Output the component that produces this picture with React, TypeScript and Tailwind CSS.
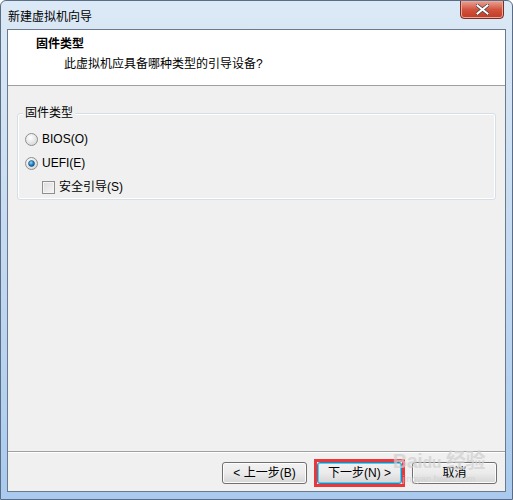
const font = { fontFamily: '"Liberation Sans", "Noto Sans CJK SC", sans-serif' };

function Radio({ checked }: { checked?: boolean }) {
  return (
    <svg width="13" height="13" viewBox="0 0 13 13">
      <defs>
        <radialGradient id={checked ? 'rg-on' : 'rg-off'} cx="0.4" cy="0.35" r="0.7">
          <stop offset="0" stopColor="#ffffff" />
          <stop offset="1" stopColor="#d6d6d6" />
        </radialGradient>
        <radialGradient id="dot" cx="0.4" cy="0.35" r="0.7">
          <stop offset="0" stopColor="#8fd6f7" />
          <stop offset="0.6" stopColor="#1f7fc2" />
          <stop offset="1" stopColor="#0b4a7a" />
        </radialGradient>
      </defs>
      <circle cx="6.5" cy="6.5" r="6" fill={`url(#${checked ? 'rg-on' : 'rg-off'})`} stroke="#8e8f8f" />
      {checked && <circle cx="6.5" cy="6.5" r="3" fill="url(#dot)" stroke="#1a4f78" strokeWidth="0.6" />}
    </svg>
  );
}

function Btn({ children }: { children: React.ReactNode }) {
  return (
    <div className="w-[85px] h-[22px] rounded-[3px] border border-[#707070] bg-gradient-to-b from-[#f2f2f2] via-[#ebebeb] to-[#d6d6d6] flex items-center justify-center text-[12px] text-black shadow-[inset_0_0_0_1px_#fcfcfc]">
      {children}
    </div>
  );
}

export default function App() {
  return (
    <div
      className="w-[513px] h-[500px] rounded-t-[6px] bg-gradient-to-b from-[#dce9f6] via-[#c4daf1] to-[#a9caee] border border-[#5b6d84] flex flex-col overflow-hidden relative"
      style={font}
    >
      {/* title bar */}
      <div className="h-[28px] shrink-0 flex items-start justify-between pl-[7px]">
        <span className="text-[12px] text-black mt-[7px]">新建虚拟机向导</span>
        <div className="w-[44px] h-[19px] mr-[8px] -mt-px rounded-b-[4px] border border-[#7a2f26] bg-gradient-to-b from-[#e8a293] via-[#d2533f] to-[#c23a22] flex items-center justify-center shadow-[inset_0_0_0_1px_#eba99b]">
          <svg width="13" height="11" viewBox="0 0 13 11">
            <path d="M1.5 1.5 L11.5 9.5 M11.5 1.5 L1.5 9.5" stroke="#3b3b3b" strokeWidth="3.4" strokeLinecap="square" />
            <path d="M1.5 1.5 L11.5 9.5 M11.5 1.5 L1.5 9.5" stroke="#ffffff" strokeWidth="2" strokeLinecap="square" />
          </svg>
        </div>
      </div>

      {/* client area */}
      <div className="flex-1 ml-[6px] mr-[6px] mb-[7px] border border-[#6a7a8c] bg-[#f0f0f0] flex flex-col">
        <div className="h-[56px] shrink-0 bg-white border-b border-[#a0a0a0] pl-[28px] pt-[5px]">
          <div className="text-[12px] font-bold text-black leading-[18px]">固件类型</div>
          <div className="text-[12px] text-black leading-[18px] pl-[28px] mt-[2px]">此虚拟机应具备哪种类型的引导设备?</div>
        </div>

        <div className="flex-1 px-[9px] pt-[27px]">
          <div className="relative h-[87px] rounded-[3px] border border-[#d5dfe5] shadow-[inset_0_0_0_1px_#ffffff]">
            <span className="absolute -top-[10px] left-[5px] px-[2px] bg-[#f0f0f0] text-[12px] leading-[18px] text-black">固件类型</span>
            <div className="pt-[13px] pl-[7px] flex flex-col text-[12px] text-black">
              <div className="h-[24px] flex items-center gap-[4px]">
                <Radio />
                <span>BIOS(O)</span>
              </div>
              <div className="h-[24px] flex items-center gap-[4px]">
                <Radio checked />
                <span>UEFI(E)</span>
              </div>
              <div className="h-[24px] flex items-center gap-[4px] pl-[17px]">
                <div className="w-[13px] h-[13px] border border-[#8e8f8f] bg-gradient-to-br from-[#dcdcdc] to-[#f6f6f6] shadow-[inset_0_0_0_1px_#f4f4f4]" />
                <span>安全引导(S)</span>
              </div>
            </div>
          </div>
        </div>

        <div className="h-[40px] shrink-0 border-t border-[#a0a0a0] shadow-[inset_0_1px_0_#ffffff] flex justify-end items-start pt-[10px] pr-[8px] gap-[10px] relative">
          <Btn>&lt; 上一步(B)</Btn>
          <div className="relative">
            <div className="w-[85px] h-[22px] rounded-[3px] border border-[#3c7fb1] bg-gradient-to-b from-[#f2f2f2] via-[#ebebeb] to-[#d6d6d6] flex items-center justify-center text-[12px] text-black shadow-[inset_0_0_0_1px_#48d4f9]">
              下一步(N) &gt;
            </div>
            <div className="absolute -left-[3px] -top-[3px] w-[91px] h-[28px] border-[3px] border-[#e8383d] pointer-events-none" />
          </div>
          <Btn>取消</Btn>
          {/* faint site watermark */}
          <div className="absolute right-[20px] -top-[2px] flex flex-col items-center text-[#cfcfcf] opacity-70 pointer-events-none">
            <span className="text-[20px] font-bold leading-[22px] tracking-tight">Bai<span className="text-[16px]">du</span> 经验</span>
            <span className="text-[9px] leading-[10px]">jingyan.baidu.com</span>
          </div>
        </div>
      </div>
    </div>
  );
}
